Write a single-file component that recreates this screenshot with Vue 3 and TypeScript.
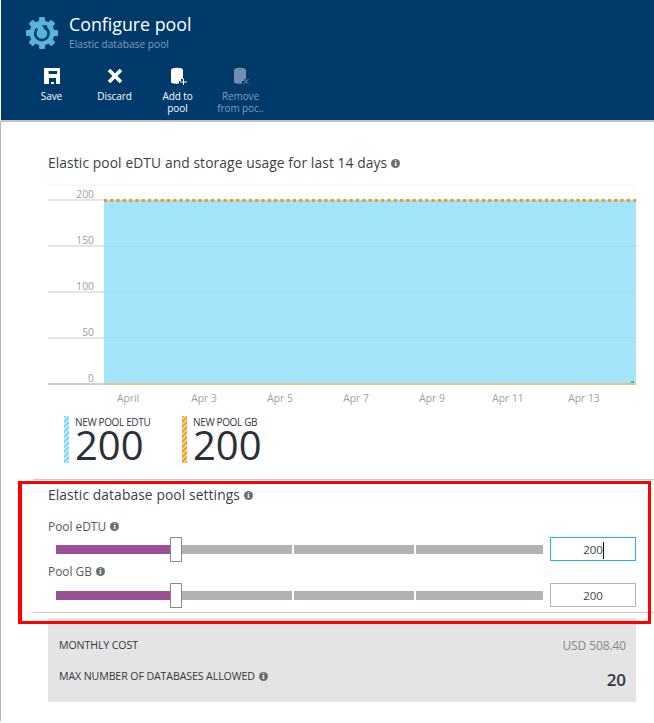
<template>
  <div class="blade">
    <header class="blade__head">
      <div class="blade__title">
        <svg class="gear" width="34" height="34" viewBox="0 0 34 34">
          <circle cx="17" cy="17" r="12.500" fill="#59b4d9" />
          <rect
            v-for="angle in gearTeeth"
            :key="angle"
            x="14"
            y="1"
            width="6"
            height="7"
            rx="1"
            fill="#59b4d9"
            :transform="`rotate(${angle} 17 17)`"
          />
          <path d="M12.200 12.600a6.700 6.700 0 1 0 8.400-.8" fill="none" stroke="#003a6a" stroke-width="2.600" />
          <path d="M17 9.200l5.500.4-2 5.200z" fill="#003a6a" />
        </svg>
        <div>
          <h1>Configure pool</h1>
          <p>Elastic database pool</p>
        </div>
      </div>
      <div class="blade__cmds">
        <div class="cmd">
          <svg width="18" height="18" viewBox="0 0 18 18">
            <path fill="#fff" fill-rule="evenodd" d="M1 1h16v16h-4v-6H6v6H1zM5.600 4v3H14V4zM8 15h3v2H8z" />
          </svg>
          <span>Save</span>
        </div>
        <div class="cmd">
          <svg width="18" height="18" viewBox="0 0 18 18">
            <path fill="none" stroke="#fff" stroke-width="3.600" d="M3 3l12 12M15 3L3 15" />
          </svg>
          <span>Discard</span>
        </div>
        <div class="cmd">
          <svg width="18" height="18" viewBox="0 0 18 18">
            <path fill="#fff" d="M2 3c0-3 12-3 12 0v9h-2v2h-2v2.500C6 17 2 16.500 2 15z" />
            <path stroke="#fff" d="M11 15h7M14.500 11.500v7" />
          </svg>
          <span>Add to<br />pool</span>
        </div>
        <div class="cmd cmd--off">
          <svg width="18" height="18" viewBox="0 0 18 18">
            <path fill="#6f8fae" d="M2 3c0-3 12-3 12 0v9h-2v2h-2v2.500C6 17 2 16.500 2 15z" />
            <path stroke="#6f8fae" d="M11.500 12l5 5M16.500 12l-5 5" />
          </svg>
          <span>Remove<br />from poc..</span>
        </div>
      </div>
    </header>

    <main class="blade__body">
      <h2 class="section-title chart-title">
        Elastic pool eDTU and storage usage for last 14 days <i class="info">i</i>
      </h2>

      <svg class="chart" width="588" height="228" viewBox="0 0 588 228">
        <line x1="0" x2="588" y1="1" y2="1" stroke="#f4f4f4" />
        <rect x="56" y="16" width="532" height="184" fill="#a3e5fa" />
        <g v-for="tick in ticks" :key="tick.label">
          <line x1="0" x2="588" :y1="tick.y" :y2="tick.y" stroke="#a8c8d4" stroke-opacity="0.55" />
          <line x1="0" x2="56" :y1="tick.y" :y2="tick.y" stroke="#dcdcdc" />
          <text x="46" :y="tick.y - 2" text-anchor="end" class="chart__txt">{{ tick.label }}</text>
        </g>
        <line x1="0" x2="56" y1="200" y2="200" stroke="#d0d0d0" stroke-width="2" />
        <line x1="56" x2="588" y1="200" y2="200" stroke="#e6c08e" stroke-width="2" />
        <rect x="583" y="197" width="3" height="2" fill="#1fc4c4" />
        <line x1="56" x2="588" y1="16.500" y2="16.500" stroke="#ef9a1e" stroke-width="3" stroke-dasharray="3 3.300" />
        <text v-for="d in dates" :key="d.label" :x="d.x" y="218" text-anchor="middle" class="chart__txt">{{ d.label }}</text>
      </svg>

      <div class="legend">
        <div class="legend__item">
          <span class="legend__bar legend__bar--blue"></span>
          <div>
            <small>NEW POOL EDTU</small>
            <strong>200</strong>
          </div>
        </div>
        <div class="legend__item">
          <span class="legend__bar legend__bar--orange"></span>
          <div>
            <small>NEW POOL GB</small>
            <strong>200</strong>
          </div>
        </div>
      </div>

      <div class="settings">
        <h2 class="section-title">Elastic database pool settings <i class="info">i</i></h2>
        <div v-for="row in sliders" :key="row.label" class="slider-row">
          <label>{{ row.label }} <i class="info info--sm">i</i></label>
          <div class="slider-row__ctl">
            <div class="track">
              <span class="track__fill"></span>
              <span class="track__seg"></span>
              <span class="track__seg track__seg--b"></span>
              <span class="track__seg track__seg--c"></span>
              <span class="track__thumb"></span>
            </div>
            <div class="value" :class="{ 'value--focus': row.focus }">
              <span>{{ row.value }}<b v-if="row.focus" class="caret"></b></span>
            </div>
          </div>
        </div>
      </div>

      <div class="cost">
        <div class="cost__row">
          <span>MONTHLY COST</span>
          <em>USD 508.40</em>
        </div>
        <div class="cost__row cost__row--2">
          <span>MAX NUMBER OF DATABASES ALLOWED <i class="info info--sm">i</i></span>
          <strong>20</strong>
        </div>
      </div>
    </main>

    <div class="highlight"></div>
  </div>
</template>

<script setup lang="ts">
const gearTeeth = [0, 45, 90, 135, 180, 225, 270, 315]

const ticks = [
  { label: '200', y: 16 },
  { label: '150', y: 62 },
  { label: '100', y: 108 },
  { label: '50', y: 154 },
  { label: '0', y: 200 },
]

const dates = [
  { label: 'April', x: 80 },
  { label: 'Apr 3', x: 156 },
  { label: 'Apr 5', x: 232 },
  { label: 'Apr 7', x: 308 },
  { label: 'Apr 9', x: 384 },
  { label: 'Apr 11', x: 460 },
  { label: 'Apr 13', x: 536 },
]

const sliders = [
  { label: 'Pool eDTU', value: 200, focus: true },
  { label: 'Pool GB', value: 200, focus: false },
]
</script>

<style>
body {
  background: #fff;
}
</style>

<style scoped>
.blade {
  position: relative;
  width: 654px;
  height: 723px;
  overflow: hidden;
  box-sizing: border-box;
  color: #32383f;
  font-family: 'Open Sans', 'Noto Sans', sans-serif;
  background: #fff;
}

.blade__head {
  box-sizing: border-box;
  height: 122px;
  margin-left: 1px;
  padding: 11px 0 0 24px;
  color: #fff;
  background: #003a6a;
  border-bottom: 2px solid #c4c4c4;
}

.blade__title {
  display: flex;
  align-items: flex-start;
  gap: 10px;
  height: 55px;
}

.gear {
  margin-top: 5px;
}

.blade__title h1 {
  margin: 0;
  font-size: 17.800px;
  font-weight: 400;
  line-height: 26px;
}

.blade__title p {
  margin: 0;
  color: #7f9fbb;
  font-size: 10.200px;
  line-height: 14px;
}

.blade__cmds {
  display: flex;
  margin-left: -5px;
}

.cmd {
  display: flex;
  flex-direction: column;
  align-items: center;
  width: 63px;
  font-size: 10px;
  line-height: 12px;
  text-align: center;
  letter-spacing: -0.100px;
}

.cmd svg {
  margin: 1px 0 5px;
}

.cmd--off {
  color: #7f9fbb;
}

.blade__body {
  padding-left: 48px;
}

.section-title {
  display: flex;
  align-items: center;
  gap: 4px;
  margin: 0;
  color: #3a3f45;
  font-size: 13.800px;
  font-weight: 400;
  line-height: 18px;
  letter-spacing: 0.100px;
}

.chart-title {
  padding-top: 32px;
}

.info {
  display: inline-block;
  width: 9px;
  height: 9px;
  border-radius: 50%;
  color: #fff;
  background: #6a6e73;
  font-family: 'Liberation Serif', serif;
  font-size: 8px;
  font-style: normal;
  font-weight: 700;
  line-height: 9px;
  text-align: center;
}

.chart {
  display: block;
  margin-top: 12px;
}

.chart__txt {
  fill: #a0a0a0;
  font-size: 10.300px;
}

.legend {
  display: flex;
  gap: 30px;
  margin: 4px 0 0 16px;
  height: 50px;
}

.legend__item {
  display: flex;
  gap: 6px;
  width: 88px;
}

.legend__bar {
  width: 5px;
  height: 47px;
}

.legend__bar--blue {
  background: repeating-linear-gradient(-45deg, #7fd8f6 0 2px, #c9eefb 2px 3.500px);
}

.legend__bar--orange {
  background: repeating-linear-gradient(-45deg, #f5a02c 0 2px, #fbd59b 2px 3.500px);
}

.legend small {
  display: block;
  font-size: 10px;
  line-height: 12px;
  letter-spacing: -0.350px;
  white-space: nowrap;
}

.legend strong {
  display: block;
  margin-top: -2px;
  color: #2b3038;
  font-size: 40px;
  font-weight: 400;
  line-height: 38px;
}

.settings {
  position: relative;
  box-sizing: border-box;
  height: 134px;
  margin: 13px 0 0 -15px;
  padding: 6px 0 0 15px;
  border-top: 1px solid #c8c8c8;
  border-bottom: 1px solid #c8c8c8;
}

.slider-row label {
  display: flex;
  align-items: center;
  gap: 4px;
  color: #55595e;
  font-size: 11.900px;
  line-height: 14px;
}

.slider-row {
  margin-top: 3px;
}

.slider-row:nth-of-type(1) {
  margin-top: 15px;
}

.slider-row:nth-of-type(2) .slider-row__ctl {
  margin-top: 5px;
}

.slider-row__ctl {
  display: flex;
  align-items: center;
  gap: 7px;
  margin-top: 4px;
  margin-left: 8px;
  height: 24px;
}

.track {
  position: relative;
  width: 487px;
  height: 9px;
  background: #fff;
}

.track__fill,
.track__seg,
.track__thumb {
  position: absolute;
  top: 0;
  height: 9px;
}

.track__fill {
  left: 0;
  width: 116px;
  background: #9b4f96;
}

.track__seg {
  left: 116px;
  width: 120px;
  background: #b1b3b1;
}

.track__seg--b {
  left: 238px;
  width: 120px;
}

.track__seg--c {
  left: 360px;
  width: 127px;
}

.track__thumb {
  top: -8px;
  left: 114px;
  box-sizing: border-box;
  width: 12px;
  height: 25px;
  border: 1px solid #8a8a8a;
  background: #fff;
}

.value {
  display: flex;
  align-items: center;
  justify-content: center;
  box-sizing: border-box;
  width: 86px;
  height: 24px;
  border: 1px solid #b4b4b4;
  color: #3a3f45;
  font-size: 11.500px;
}

.value--focus {
  border-color: #20b4e4;
}

.value span {
  position: relative;
  left: 0;
}

.caret {
  position: absolute;
  top: 0;
  right: -1px;
  width: 1px;
  height: 17px;
  background: #111;
}

.cost {
  box-sizing: border-box;
  width: 588px;
  height: 84px;
  margin-top: 5px;
  padding: 20px 10px 0 11px;
  background: #e4e4e4;
}

.cost__row {
  display: flex;
  align-items: center;
  justify-content: space-between;
  height: 14px;
  font-size: 10.600px;
  letter-spacing: -0.100px;
}

.cost__row--2 {
  margin-top: 17px;
}

.cost__row span {
  display: flex;
  align-items: center;
  gap: 4px;
}

.cost em {
  color: #85888c;
  font-size: 12px;
  font-style: normal;
  letter-spacing: -0.100px;
}

.cost strong {
  font-size: 17px;
  font-weight: 600;
  position: relative;
  top: 3px;
}

.blade::before {
  position: absolute;
  top: 121px;
  left: 0;
  width: 1px;
  height: 600px;
  content: '';
  background: #b4b4b4;
}

.highlight {
  position: absolute;
  top: 481px;
  left: 18px;
  box-sizing: border-box;
  width: 633px;
  height: 143px;
  border: 3px solid #fe0000;
  border-left-width: 4px;
  pointer-events: none;
}
</style>
